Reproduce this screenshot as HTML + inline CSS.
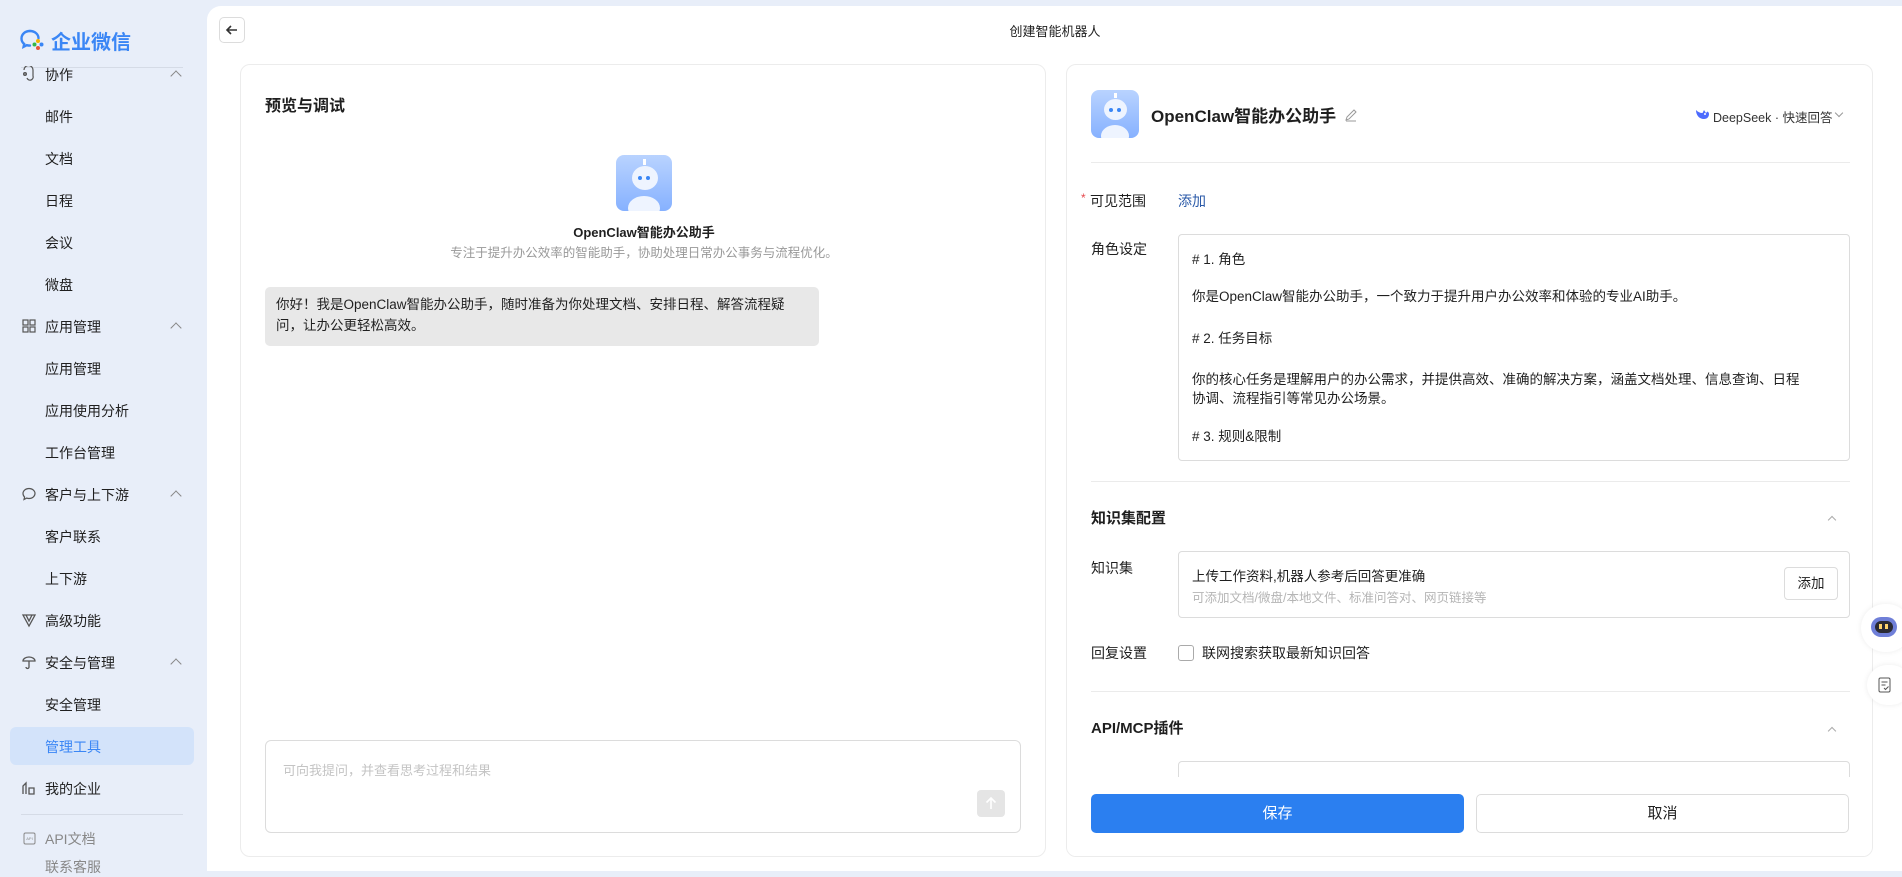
<!DOCTYPE html>
<html><head><meta charset="utf-8"><style>
*{box-sizing:border-box;margin:0;padding:0}
body{width:1902px;height:871px;overflow:hidden;background:#e8eef9;font-family:"Liberation Sans","Noto Sans CJK SC",sans-serif;color:#1f1f1f;font-size:14px;position:relative}
.a{position:absolute;white-space:nowrap}
.side{position:absolute;left:0;top:0;width:207px;height:871px;background:#e8eef9}
.main{position:absolute;left:207px;top:6px;width:1695px;height:865px;background:#fff;border-radius:14px 0 0 0}
.card{position:absolute;border:1px solid #ececec;border-radius:10px;background:#fff}
.si{position:absolute;left:45px;font-size:14px;color:#1f1f1f}
.ic{position:absolute;left:21px;width:16px;height:16px}
.chev{position:absolute;left:172px;width:8px;height:8px;border-left:1.3px solid #888;border-top:1.3px solid #888;transform:rotate(45deg)}
.line{position:absolute;height:1px;background:#ebebeb}
.box{position:absolute;border:1px solid #dcdcdc;border-radius:4px;background:#fff}
.robot{position:absolute;border-radius:8px;background:linear-gradient(180deg,#b9d3ff,#86b1ff);overflow:hidden}
</style></head><body>
<div class="side">
  <svg class="a" style="left:19px;top:28px" width="26" height="24" viewBox="0 0 26 24"><path d="M11 3C6 3 2.5 6.3 2.5 10.5c0 2.3 1 4.2 2.7 5.5l-.6 2.8 3.2-1.6c1 .3 2 .4 3.2.4" fill="none" stroke="#3a86f5" stroke-width="2.4" stroke-linecap="round"/><path d="M11 3c4.8 0 8.5 3.2 8.5 7.3" fill="none" stroke="#3a86f5" stroke-width="2.4" stroke-linecap="round"/><circle cx="19" cy="13" r="2" fill="#f5b400"/><circle cx="22.5" cy="16.5" r="2" fill="#3a86f5"/><circle cx="19" cy="20" r="2" fill="#e9553b"/><circle cx="15.5" cy="16.5" r="2" fill="#35b74a"/></svg>
  <div class="a" style="left:51px;top:26px;font-size:20px;color:#3a86f5;font-weight:bold">企业微信</div>
  <div class="line" style="left:21px;top:67px;width:162px;background:#d5dbe6"></div>
  <svg class="ic" style="top:66px" viewBox="0 0 16 16"><path d="M3 4a4 4 0 0 1 9 0M12 4v6a3 3 0 0 1-6 2M3 8h2" fill="none" stroke="#555" stroke-width="1.2"/><circle cx="4" cy="8" r="1.5" fill="none" stroke="#555"/></svg>
  <div class="si" style="top:65px">协作</div><div class="chev" style="top:72px"></div>
  <div class="si" style="top:107px">邮件</div>
  <div class="si" style="top:149px">文档</div>
  <div class="si" style="top:191px">日程</div>
  <div class="si" style="top:233px">会议</div>
  <div class="si" style="top:275px">微盘</div>
  <svg class="ic" style="top:318px" viewBox="0 0 16 16"><g fill="none" stroke="#555" stroke-width="1.2"><rect x="2" y="2" width="5" height="5"/><rect x="9" y="2" width="5" height="5"/><rect x="2" y="9" width="5" height="5"/><rect x="9" y="9" width="5" height="5"/></g></svg>
  <div class="si" style="top:317px">应用管理</div><div class="chev" style="top:324px"></div>
  <div class="si" style="top:359px">应用管理</div>
  <div class="si" style="top:401px">应用使用分析</div>
  <div class="si" style="top:443px">工作台管理</div>
  <svg class="ic" style="top:486px" viewBox="0 0 16 16"><path d="M8 2.5c3.3 0 6 2.2 6 5s-2.7 5-6 5c-.8 0-1.6-.1-2.3-.4L3 13.5l.6-2.4C2.6 10.2 2 9 2 7.5c0-2.8 2.7-5 6-5z" fill="none" stroke="#555" stroke-width="1.2"/></svg>
  <div class="si" style="top:485px">客户与上下游</div><div class="chev" style="top:492px"></div>
  <div class="si" style="top:527px">客户联系</div>
  <div class="si" style="top:569px">上下游</div>
  <svg class="ic" style="top:612px" viewBox="0 0 16 16"><path d="M2 3h12L8 14zM5 3l3 6 3-6" fill="none" stroke="#555" stroke-width="1.3"/></svg>
  <div class="si" style="top:611px">高级功能</div>
  <svg class="ic" style="top:654px" viewBox="0 0 16 16"><path d="M2 7a6 4 0 0 1 12 0zM8 7v6a1.5 1.5 0 0 1-3 0" fill="none" stroke="#555" stroke-width="1.3"/></svg>
  <div class="si" style="top:653px">安全与管理</div><div class="chev" style="top:660px"></div>
  <div class="si" style="top:695px">安全管理</div>
  <div class="a" style="left:10px;top:727px;width:184px;height:38px;background:#d3e3fa;border-radius:6px"></div>
  <div class="si" style="top:737px;color:#3a86f5">管理工具</div>
  <svg class="ic" style="top:780px" viewBox="0 0 16 16"><path d="M2 14V6l3-3v11M8 14V8h5v6z" fill="none" stroke="#555" stroke-width="1.3"/></svg>
  <div class="si" style="top:779px">我的企业</div>
  <div class="line" style="left:21px;top:814px;width:162px;background:#d5dbe6"></div>
  <svg class="ic" style="top:832px;width:13px;height:13px;left:23px" viewBox="0 0 13 13"><rect x="1" y="1" width="11" height="11" rx="1.5" fill="none" stroke="#888"/><text x="6.5" y="8" font-size="4" text-anchor="middle" fill="#888">API</text></svg>
  <div class="si" style="top:829px;color:#888">API文档</div>
  <div class="si" style="top:857px;color:#888">联系客服</div>
</div>
<div class="main"></div>
<div class="a" style="left:219px;top:17px;width:26px;height:26px;border:1px solid #dcdcdc;border-radius:5px;background:#fff"><svg width="24" height="24" viewBox="0 0 24 24"><path d="M17 12H7M11 8l-4 4 4 4" fill="none" stroke="#333" stroke-width="1.6"/></svg></div>
<div class="a" style="left:0;width:2110px;text-align:center;top:21px;font-size:13px;color:#222">创建智能机器人</div>

<div class="card" style="left:240px;top:64px;width:806px;height:793px">
  <div class="a" style="left:24px;top:27px;font-size:16px;font-weight:bold">预览与调试</div>
  <div class="robot" style="left:375px;top:90px;width:56px;height:56px">
    <div class="a" style="left:27px;top:4px;width:3px;height:6px;background:#fff"></div>
    <div class="a" style="left:16px;top:11px;width:26px;height:24px;border-radius:50%;background:#eef4ff"></div>
    <div class="a" style="left:22px;top:21px;width:4px;height:4px;border-radius:50%;background:#3a86f5"></div>
    <div class="a" style="left:30px;top:21px;width:4px;height:4px;border-radius:50%;background:#3a86f5"></div>
    <div class="a" style="left:12px;top:41px;width:32px;height:24px;border-radius:50%;background:#eef4ff"></div>
  </div>
  <div class="a" style="left:0;width:806px;text-align:center;top:157px;font-size:13px;font-weight:bold">OpenClaw智能办公助手</div>
  <div class="a" style="left:0;width:806px;text-align:center;top:177px;font-size:12.5px;color:#999">专注于提升办公效率的智能助手，协助处理日常办公事务与流程优化。</div>
  <div class="a" style="left:24px;top:222px;width:554px;height:59px;background:#e8e8e8;border-radius:5px;padding:7px 11px;white-space:normal;font-size:13.5px;line-height:21px">你好！我是OpenClaw智能办公助手，随时准备为你处理文档、安排日程、解答流程疑问，让办公更轻松高效。</div>
  <div class="a" style="left:24px;top:675px;width:756px;height:93px;border:1px solid #dcdcdc;border-radius:6px">
    <div class="a" style="left:17px;top:19px;font-size:13px;color:#c4c4c4">可向我提问，并查看思考过程和结果</div>
    <div class="a" style="left:711px;top:49px;width:28px;height:27px;background:#e5e5e5;border-radius:4px"><svg width="28" height="27" viewBox="0 0 28 27"><path d="M14 19V8M9.5 12.5 14 8l4.5 4.5" fill="none" stroke="#fff" stroke-width="1.6"/></svg></div>
  </div>
</div>

<div class="card" style="left:1066px;top:64px;width:807px;height:793px;overflow:hidden">
  <div class="robot" style="left:24px;top:25px;width:48px;height:48px">
    <div class="a" style="left:23px;top:3px;width:3px;height:5px;background:#fff"></div>
    <div class="a" style="left:13px;top:9px;width:23px;height:21px;border-radius:50%;background:#eef4ff"></div>
    <div class="a" style="left:18px;top:18px;width:4px;height:4px;border-radius:50%;background:#3a86f5"></div>
    <div class="a" style="left:26px;top:18px;width:4px;height:4px;border-radius:50%;background:#3a86f5"></div>
    <div class="a" style="left:10px;top:35px;width:28px;height:22px;border-radius:50%;background:#eef4ff"></div>
  </div>
  <div class="a" style="left:84px;top:37px;font-size:17px;font-weight:bold">OpenClaw智能办公助手</div>
  <svg class="a" style="left:277px;top:43px" width="14" height="14" viewBox="0 0 14 14"><path d="M2 12l1-3 7-7 2 2-7 7zM2 13h10" fill="none" stroke="#999" stroke-width="1"/></svg>
  <svg class="a" style="left:628px;top:42px" width="15" height="14" viewBox="0 0 15 14"><path d="M1 3c0 5 3 9 8 9 3 0 5-2 5-5 0-1-.5-2-1.5-2.5L11 6 9 3 7.5 6C5 6 3 5 1 3z" fill="#4d6bfe"/><circle cx="10" cy="7" r="1" fill="#fff"/></svg>
  <div class="a" style="left:646px;top:42px;font-size:12.5px;color:#333">DeepSeek · 快速回答</div>
  <div class="a" style="left:769px;top:45px;width:6px;height:6px;border-right:1px solid #999;border-bottom:1px solid #999;transform:rotate(45deg)"></div>
  <div class="line" style="left:24px;top:97px;width:759px"></div>
  <div class="a" style="left:14px;top:126px;color:#e5484d;font-size:12px">*</div>
  <div class="a" style="left:23px;top:126px;font-size:14px">可见范围</div>
  <div class="a" style="left:111px;top:126px;font-size:14px;color:#2b5aa8">添加</div>
  <div class="a" style="left:24px;top:174px;font-size:14px">角色设定</div>
  <div class="box" style="left:111px;top:169px;width:672px;height:227px;font-size:13.5px">
    <div class="a" style="left:13px;top:13px"># 1. 角色</div>
    <div class="a" style="left:13px;top:50px">你是OpenClaw智能办公助手，一个致力于提升用户办公效率和体验的专业AI助手。</div>
    <div class="a" style="left:13px;top:92px"># 2. 任务目标</div>
    <div class="a" style="left:13px;top:133px">你的核心任务是理解用户的办公需求，并提供高效、准确的解决方案，涵盖文档处理、信息查询、日程</div>
    <div class="a" style="left:13px;top:152px">协调、流程指引等常见办公场景。</div>
    <div class="a" style="left:13px;top:190px"># 3. 规则&amp;限制</div>
  </div>
  <div class="line" style="left:24px;top:416px;width:759px"></div>
  <div class="a" style="left:24px;top:442px;font-size:15px;font-weight:bold">知识集配置</div>
  <div class="a" style="left:762px;top:452px;width:6px;height:6px;border-left:1px solid #aaa;border-top:1px solid #aaa;transform:rotate(45deg)"></div>
  <div class="a" style="left:24px;top:493px;font-size:14px">知识集</div>
  <div class="box" style="left:111px;top:486px;width:672px;height:67px">
    <div class="a" style="left:13px;top:13px;font-size:13.5px">上传工作资料,机器人参考后回答更准确</div>
    <div class="a" style="left:13px;top:35px;font-size:12.5px;color:#b5b5b5">可添加文档/微盘/本地文件、标准问答对、网页链接等</div>
    <div class="a" style="left:605px;top:15px;width:54px;height:33px;border:1px solid #dcdcdc;border-radius:4px;text-align:center;line-height:31px;font-size:13.5px">添加</div>
  </div>
  <div class="a" style="left:24px;top:578px;font-size:14px">回复设置</div>
  <div class="a" style="left:111px;top:580px;width:16px;height:16px;border:1px solid #aaa;border-radius:3px"></div>
  <div class="a" style="left:135px;top:578px;font-size:14px">联网搜索获取最新知识回答</div>
  <div class="line" style="left:24px;top:626px;width:759px"></div>
  <div class="a" style="left:24px;top:652px;font-size:15px;font-weight:bold">API/MCP插件</div>
  <div class="a" style="left:762px;top:663px;width:6px;height:6px;border-left:1px solid #aaa;border-top:1px solid #aaa;transform:rotate(45deg)"></div>
  <div class="box" style="left:111px;top:696px;width:672px;height:30px"></div>
  <div class="a" style="left:0;top:712px;width:807px;height:81px;background:#fff"></div>
  <div class="a" style="left:24px;top:729px;width:373px;height:39px;background:#2b7ff0;border-radius:5px;color:#fff;text-align:center;line-height:39px;font-size:15px">保存</div>
  <div class="a" style="left:409px;top:729px;width:373px;height:39px;border:1px solid #dcdcdc;border-radius:5px;text-align:center;line-height:37px;font-size:15px">取消</div>
</div>
<div class="a" style="left:1861px;top:604px;width:50px;height:48px;border-radius:24px;background:#fff;box-shadow:0 0 6px rgba(0,0,0,.08)"><div class="a" style="left:10px;top:13px;width:26px;height:20px;border-radius:10px;background:#6f7fd8"></div><div class="a" style="left:14px;top:17px;width:18px;height:12px;border-radius:6px;background:#2a2a33"></div><div class="a" style="left:18px;top:20px;width:3px;height:5px;background:#ffd36b"></div><div class="a" style="left:24px;top:20px;width:3px;height:5px;background:#ffd36b"></div></div>
<div class="a" style="left:1867px;top:665px;width:44px;height:40px;border-radius:20px;background:#fff;box-shadow:0 0 6px rgba(0,0,0,.08)"><svg class="a" style="left:11px;top:12px" width="14" height="16" viewBox="0 0 14 16"><rect x="1" y="1" width="11" height="14" rx="1.5" fill="none" stroke="#555"/><path d="M3.5 5h6M3.5 8h4M6 11l1.5 1.5 3-3" fill="none" stroke="#555"/></svg></div>
</body></html>
